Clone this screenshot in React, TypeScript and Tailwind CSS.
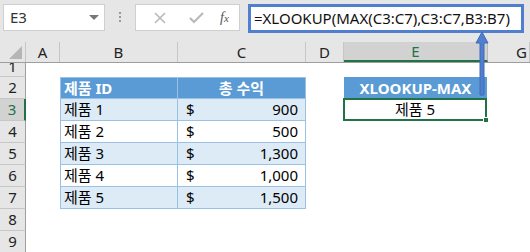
import React from 'react'

const cols = ['A', 'B', 'C', 'D', 'E', 'G']
const colWidths = [34, 118, 128, 38, 144, 42]

const rows = [
  { id: '제품 1', value: '900' },
  { id: '제품 2', value: '500' },
  { id: '제품 3', value: '1,300' },
  { id: '제품 4', value: '1,000' },
  { id: '제품 5', value: '1,500' },
]

const font = { fontFamily: '"Noto Sans", "Noto Sans CJK KR", sans-serif' }

function RowHead({ n, selected, short }: { n: number; selected?: boolean; short?: boolean }) {
  return (
    <div
      className={`w-[26px] shrink-0 flex justify-center border-b border-[#c6c6c6] text-[15px] ${
        short ? 'h-[14px] items-start overflow-hidden' : 'h-[22px] items-center leading-none'
      } ${selected ? 'bg-[#d2d2d2] text-[#217346] border-r-2 border-r-[#217346]' : 'bg-[#e6e6e6] text-[#222] border-r border-r-[#9e9e9e]'}`}
    >
      <span className={short ? 'block leading-[14px] -mt-[4px]' : ''}>{n}</span>
    </div>
  )
}

export default function App() {
  return (
    <div className="relative w-[530px] h-[252px] overflow-hidden bg-white" style={font}>
      {/* formula bar */}
      <div className="flex h-[42px] items-start bg-[#e6e6e6] pt-[4px]">
        <div className="ml-[3px] flex h-[27px] w-[102px] items-center justify-between border border-[#cfcfcf] bg-white pl-[6px] pr-[5px]">
          <span className="text-[15px] text-[#333]">E3</span>
          <span className="h-0 w-0 border-x-[5px] border-t-[5px] border-x-transparent border-t-[#777]" />
        </div>
        <div className="flex w-[30px] flex-col items-center gap-[2px] pt-[8px]">
          <span className="h-[2px] w-[2px] bg-[#9a9a9a]" />
          <span className="h-[2px] w-[2px] bg-[#9a9a9a]" />
          <span className="h-[2px] w-[2px] bg-[#9a9a9a]" />
        </div>
        <div className="flex h-[27px] w-[105px] items-center border border-[#cfcfcf] bg-white">
          <svg width="36" height="14" viewBox="0 0 36 14" className="ml-[7px]">
            <path d="M12 2l10 10M22 2L12 12" stroke="#b9b9b9" strokeWidth="1.6" />
          </svg>
          <svg width="36" height="14" viewBox="0 0 36 14">
            <path d="M11 7l4 4 9-9" stroke="#b9b9b9" strokeWidth="2.2" fill="none" />
          </svg>
          <span className="ml-[5px] text-[14px] italic text-[#555]" style={{ fontFamily: '"Liberation Serif", serif' }}>
            f<span className="text-[11px]">x</span>
          </span>
        </div>
        <div className="ml-[8px] flex h-[29px] w-[276px] items-center border-[3px] border-[#4f7fce] bg-white pl-[3px] text-[15px] text-[#111]">
          =XLOOKUP(MAX(C3:C7),C3:C7,B3:B7)
        </div>
      </div>

      {/* column headers */}
      <div className="flex h-[21px] bg-[#e6e6e6] border-b border-[#9e9e9e]">
        <div className="relative w-[26px] shrink-0 border-r border-[#c6c6c6]">
          <span
            className="absolute bottom-[3px] right-[3px] h-0 w-0"
            style={{ borderBottom: '13px solid #b5b5b5', borderLeft: '13px solid transparent' }}
          />
        </div>
        {cols.map((c, i) => (
          <div
            key={c}
            style={{ width: colWidths[i] }}
            className={`flex shrink-0 items-center justify-center text-[15px] ${
              c === 'E'
                ? 'bg-[#d2d2d2] text-[#217346] border-b-2 border-[#217346] border-r border-r-[#b8b8b8]'
                : 'text-[#222] border-r border-[#c6c6c6]'
            } ${c === 'G' ? 'justify-end pr-[2px]' : ''}`}
          >
            {c}
          </div>
        ))}
      </div>

      {/* row 1 (partially scrolled) */}
      <div className="flex">
        <RowHead n={1} short />
      </div>

      {/* row 2: headers */}
      <div className="flex h-[22px] text-[15px]">
        <RowHead n={2} />
        <div className="w-[34px] shrink-0" />
        <div className="flex w-[118px] shrink-0 items-center border border-[#9bc2e6] bg-[#5b9bd5] pl-[3px] font-bold text-white">
          제품 ID
        </div>
        <div className="flex w-[128px] shrink-0 items-center justify-center border border-l-0 border-[#9bc2e6] bg-[#5b9bd5] font-bold text-white">
          총 수익
        </div>
        <div className="w-[38px] shrink-0" />
        <div className="flex w-[143px] shrink-0 items-center justify-center bg-[#5b9bd5] font-bold text-white">
          XLOOKUP-MAX
        </div>
      </div>

      {rows.map((r, i) => (
        <div key={r.id} className="flex h-[22px] text-[15px] text-black">
          <RowHead n={i + 3} selected={i === 0} />
          <div className="w-[34px] shrink-0" />
          <div
            className={`flex w-[118px] shrink-0 items-center border-x border-b border-[#9bc2e6] pl-[3px] ${
              i % 2 === 0 ? 'bg-[#ddebf7]' : 'bg-white'
            }`}
          >
            {r.id}
          </div>
          <div
            className={`flex w-[128px] shrink-0 items-center justify-between border-r border-b border-[#9bc2e6] pl-[8px] pr-[7px] ${
              i % 2 === 0 ? 'bg-[#ddebf7]' : 'bg-white'
            }`}
          >
            <span>$</span>
            <span>{r.value}</span>
          </div>
          <div className="w-[38px] shrink-0" />
          {i === 0 && (
            <div className="relative flex h-[23px] w-[144px] shrink-0 items-center justify-center border-2 border-[#217346] -mt-[1px] -ml-[1px]">
              제품 5
              <span className="absolute -bottom-[4px] -right-[4px] h-[6px] w-[6px] border border-white bg-[#217346]" />
            </div>
          )}
        </div>
      ))}

      <div className="flex">
        <RowHead n={8} />
      </div>
      <div className="flex">
        <RowHead n={9} />
      </div>

      {/* callout arrow */}
      <svg className="absolute left-[474px] top-[31px]" width="16" height="66" viewBox="0 0 16 66">
        <path d="M8 1 L14 12 L10 12 L10 64 L6 64 L6 12 L2 12 Z" fill="#4f7fce" stroke="#3f6db8" strokeWidth="1" />
      </svg>
    </div>
  )
}
